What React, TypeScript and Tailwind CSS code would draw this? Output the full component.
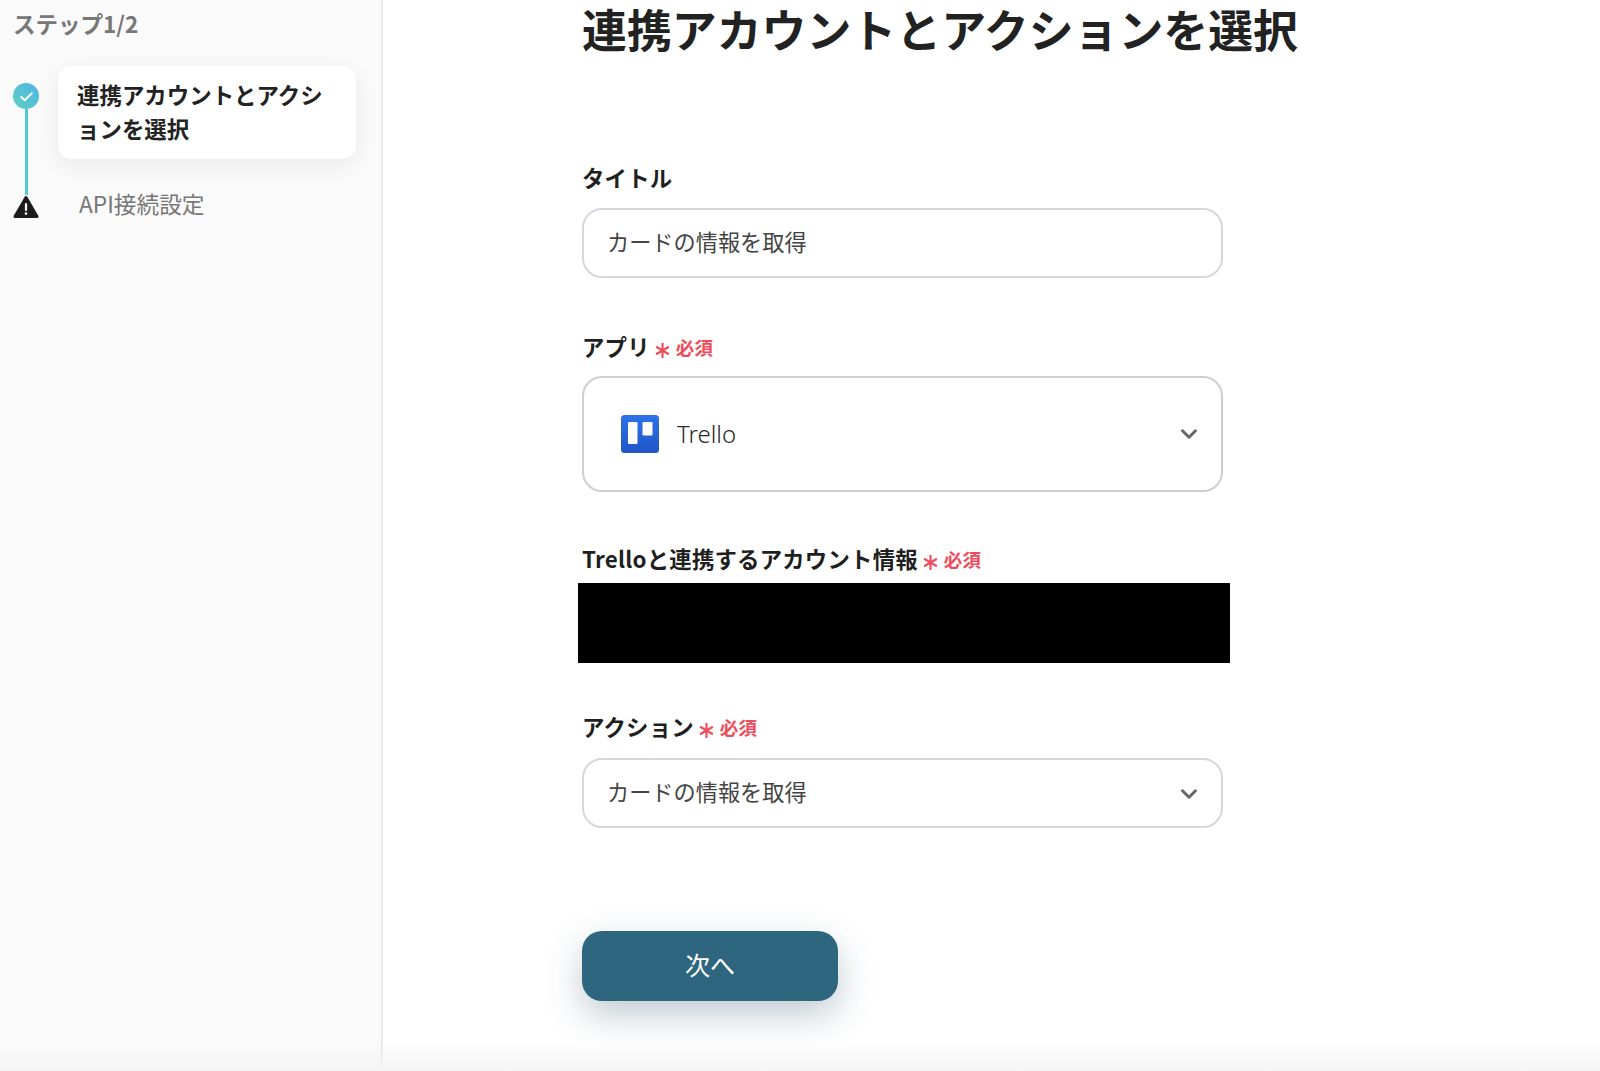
import { ChevronDown } from 'lucide-react'

const font = { fontFamily: '"Noto Sans CJK JP", "Noto Sans", sans-serif' }

function Required() {
  return (
    <span className="ml-[4px] mt-[3px] flex items-center text-[18.5px] font-bold leading-none text-[#ef4c5b]">
      <svg viewBox="0 0 16 16" className="mr-[5px] mt-[5px] h-[17px] w-[17px]" stroke="#ef4c5b" strokeWidth="2" fill="none">
        <path d="M8 1v14M2 4.5l12 7M14 4.5l-12 7" />
      </svg>
      必須
    </span>
  )
}

function Label({ text, required }: { text: string; required?: boolean }) {
  return (
    <div className="flex h-[32px] items-center text-[22.4px] font-bold leading-[32px] tracking-[0.2px] text-[#1f1f1f]">
      {text}
      {required && <Required />}
    </div>
  )
}

function TrelloLogo() {
  return (
    <svg viewBox="0 0 38 38" className="h-[38px] w-[38px]">
      <defs>
        <linearGradient id="trello" x1="0" y1="0" x2="0" y2="1">
          <stop offset="0" stopColor="#2f74ea" />
          <stop offset="1" stopColor="#1f55c8" />
        </linearGradient>
      </defs>
      <rect width="38" height="38" rx="3.5" fill="url(#trello)" />
      <rect x="7" y="7" width="9.5" height="22" rx="1.2" fill="#fff" />
      <rect x="21.5" y="7" width="10" height="13.5" rx="1.2" fill="#fff" />
    </svg>
  )
}

export default function App() {
  return (
    <div style={font} className="relative flex h-[1071px] w-[1600px] overflow-hidden bg-white">
      <aside className="h-full w-[383px] shrink-0 border-r-2 border-[#e8e8e8] bg-[#fafafa]">
        <div className="ml-[13px] mt-[7px] text-[22.5px] font-bold leading-[32px] text-[#777]">ステップ1/2</div>
        <div className="mt-[27px] flex">
          <div className="ml-[13px] flex w-[26px] flex-col items-center pt-[17px]">
            <div className="flex h-[26px] w-[26px] shrink-0 items-center justify-center rounded-full bg-gradient-to-tr from-[#5fd0bf] to-[#4fb4e6]">
              <svg viewBox="0 0 16 16" className="h-[17px] w-[17px]" fill="none" stroke="#fff" strokeWidth="1.8" strokeLinecap="round" strokeLinejoin="round">
                <path d="M3 8.5l3.3 3L13 5" />
              </svg>
            </div>
            <div className="h-[86px] w-[3px] bg-[#55c8d0]" />
            <svg viewBox="0 0 26 24" className="h-[24px] w-[26px] shrink-0">
              <path d="M13 2.5L24 21.5H2Z" fill="#1c1c1c" stroke="#1c1c1c" strokeWidth="3" strokeLinejoin="round" />
              <rect x="11.9" y="8" width="2.2" height="8" rx="1.1" fill="#fff" />
              <circle cx="13" cy="18.6" r="1.3" fill="#fff" />
            </svg>
          </div>
          <div className="ml-[19px] flex flex-col">
            <div className="w-[298px] rounded-[14px] bg-white px-[19px] pb-[14px] pt-[11px] text-[22.45px] font-bold leading-[34px] text-[#222] shadow-[0_6px_24px_rgba(0,0,0,0.07)]">
              連携アカウントとアクションを選択
            </div>
            <div className="ml-[21px] mt-[29px] text-[22.7px] leading-[32px] text-[#777]">API接続設定</div>
          </div>
        </div>
      </aside>

      <main className="ml-[199px] flex-1">
        <h1 className="mt-[1px] h-[56px] whitespace-nowrap text-[44.9px] font-bold leading-[56px] text-[#222]">
          連携アカウントとアクションを選択
        </h1>

        <div className="mt-[104px] w-[641px]">
          <Label text="タイトル" />
          <div className="mt-[15px] flex h-[70px] items-center rounded-[20px] border-2 border-[#d4d7dc] px-[23px] pb-[2px] text-[22.2px] text-[#444]">
            カードの情報を取得
          </div>

          <div className="mt-[52px]">
            <Label text="アプリ" required />
          </div>
          <div className="mt-[14px] flex h-[116px] items-center rounded-[20px] border-2 border-[#cfcfcf] pl-[37px] pr-[19px]">
            <TrelloLogo />
            <span className="ml-[18px] text-[24px] text-[#2a2a2a]" style={{ fontFamily: '"Noto Sans", sans-serif', fontWeight: 300 }}>
              Trello
            </span>
            <ChevronDown className="ml-auto h-[26px] w-[26px] text-[#666]" strokeWidth={2.8} />
          </div>

          <div className="mt-[50px]">
            <Label text="Trelloと連携するアカウント情報" required />
          </div>
          <div className="-ml-[4px] -mr-[7px] mt-[9px] h-[80px] bg-black" />

          <div className="mt-[47px]">
            <Label text="アクション" required />
          </div>
          <div className="mt-[16px] flex h-[70px] items-center rounded-[20px] border-2 border-[#d4d7dc] pl-[23px] pr-[19px] text-[22.2px] text-[#444]">
            <span className="-mt-[3px]">カードの情報を取得</span>
            <ChevronDown className="ml-auto mt-[2px] h-[26px] w-[26px] text-[#666]" strokeWidth={2.8} />
          </div>

          <button className="mt-[103px] flex h-[70px] w-[256px] items-center justify-center rounded-[20px] bg-[#2e6680] pb-[2px] text-[25px] text-white shadow-[0_14px_36px_rgba(30,70,90,0.28)]">
            次へ
          </button>
        </div>
      </main>

      <div className="pointer-events-none absolute inset-x-0 bottom-0 h-[30px] bg-gradient-to-b from-transparent to-[#f5f5f5]" />
    </div>
  )
}
